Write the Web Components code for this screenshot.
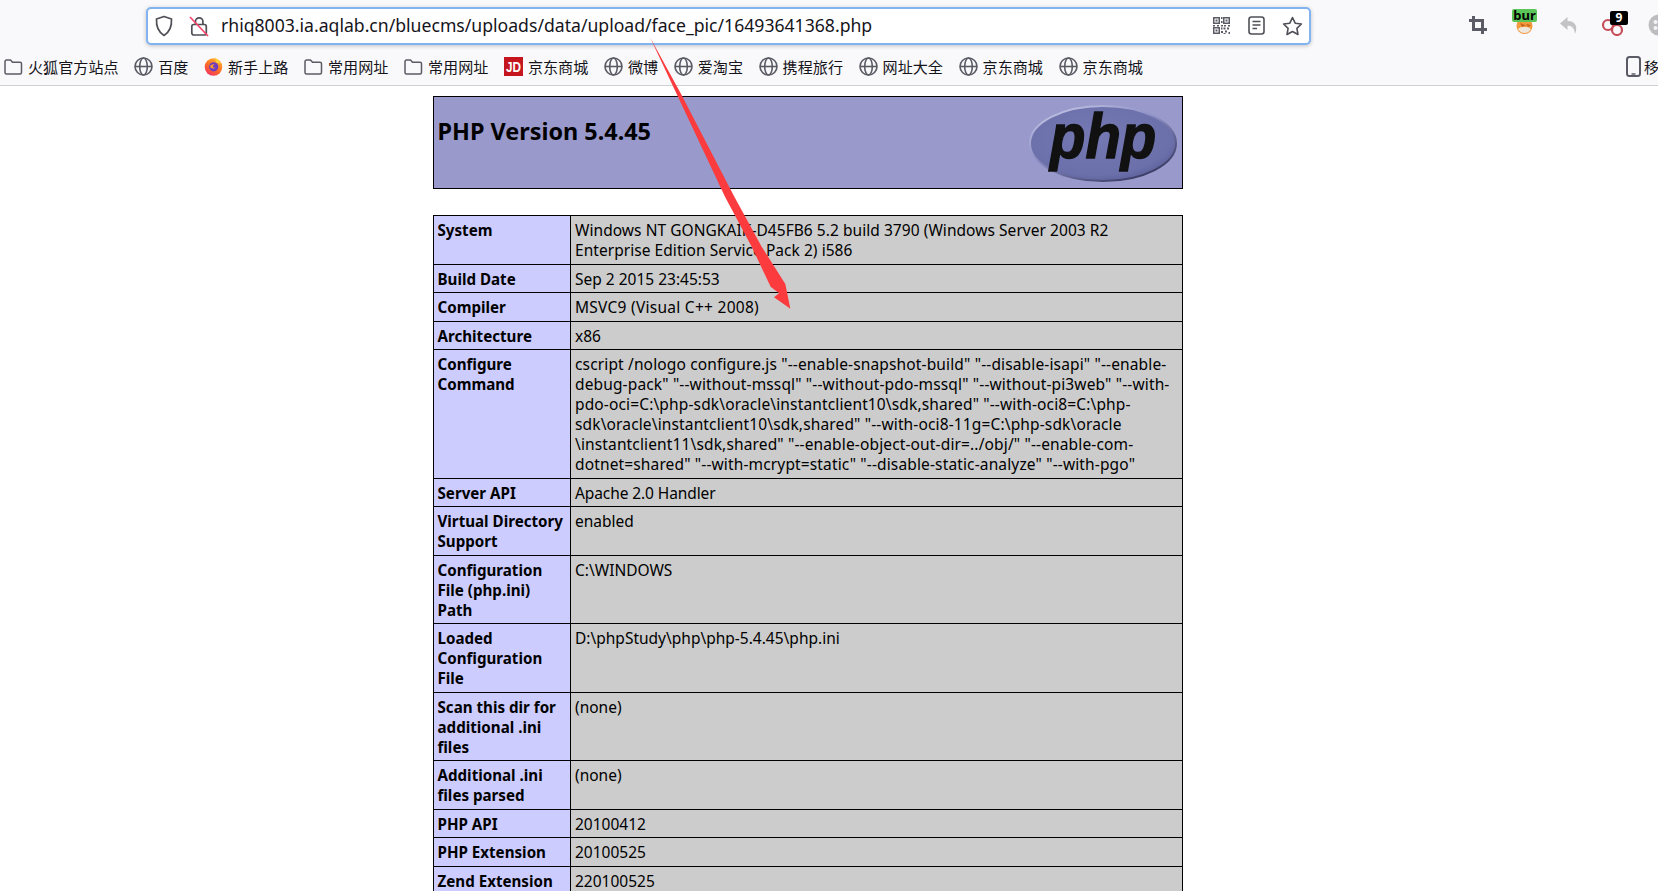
<!DOCTYPE html>
<html lang="zh">
<head>
<meta charset="utf-8">
<title>phpinfo()</title>
<style>
    html, body { margin: 0; background: #fff; overflow: hidden; height: 891px; }
    body { position: relative; font-family: "Noto Sans", "Noto Sans CJK SC", sans-serif; }
</style>
</head>
<body>
<browser-chrome>
    <url-bar slot="url">rhiq8003.ia.aqlab.cn/bluecms/uploads/data/upload/face_pic/16493641368.php</url-bar>
    <tool-icons slot="tools"></tool-icons>
    <bookmark-item slot="marks" icon="folder">火狐官方站点</bookmark-item>
    <bookmark-item slot="marks" icon="globe">百度</bookmark-item>
    <bookmark-item slot="marks" icon="firefox">新手上路</bookmark-item>
    <bookmark-item slot="marks" icon="folder">常用网址</bookmark-item>
    <bookmark-item slot="marks" icon="folder">常用网址</bookmark-item>
    <bookmark-item slot="marks" icon="jd">京东商城</bookmark-item>
    <bookmark-item slot="marks" icon="globe">微博</bookmark-item>
    <bookmark-item slot="marks" icon="globe">爱淘宝</bookmark-item>
    <bookmark-item slot="marks" icon="globe">携程旅行</bookmark-item>
    <bookmark-item slot="marks" icon="globe">网址大全</bookmark-item>
    <bookmark-item slot="marks" icon="globe">京东商城</bookmark-item>
    <bookmark-item slot="marks" icon="globe">京东商城</bookmark-item>
</browser-chrome>
<php-page>
    <php-header>PHP Version 5.4.45</php-header>
    <php-table>
        <php-row name="System" style="letter-spacing:.05px">Windows NT GONGKAIK-D45FB6 5.2 build 3790 (Windows Server 2003 R2<br>Enterprise Edition Service Pack 2) i586</php-row>
        <php-row name="Build Date">Sep 2 2015 23:45:53</php-row>
        <php-row name="Compiler" style="letter-spacing:.27px">MSVC9 (Visual C++ 2008)</php-row>
        <php-row name="Architecture">x86</php-row>
        <php-row name="Configure<br>Command" style="letter-spacing:.14px">cscript /nologo configure.js "--enable-snapshot-build" "--disable-isapi" "--enable-<br>debug-pack" "--without-mssql" "--without-pdo-mssql" "--without-pi3web" "--with-<br>pdo-oci=C:\php-sdk\oracle\instantclient10\sdk,shared" "--with-oci8=C:\php-<br>sdk\oracle\instantclient10\sdk,shared" "--with-oci8-11g=C:\php-sdk\oracle<br>\instantclient11\sdk,shared" "--enable-object-out-dir=../obj/" "--enable-com-<br>dotnet=shared" "--with-mcrypt=static" "--disable-static-analyze" "--with-pgo"</php-row>
        <php-row name="Server API" style="letter-spacing:-.1px">Apache 2.0 Handler</php-row>
        <php-row name="Virtual Directory<br>Support">enabled</php-row>
        <php-row name="Configuration<br>File (php.ini)<br>Path">C:\WINDOWS</php-row>
        <php-row name="Loaded<br>Configuration<br>File">D:\phpStudy\php\php-5.4.45\php.ini</php-row>
        <php-row name="Scan this dir for<br>additional .ini<br>files">(none)</php-row>
        <php-row name="Additional .ini<br>files parsed">(none)</php-row>
        <php-row name="PHP API">20100412</php-row>
        <php-row name="PHP Extension">20100525</php-row>
        <php-row name="Zend Extension">220100525</php-row>
    </php-table>
</php-page>
<red-arrow></red-arrow>

<script>
const stroke = "#5b5b66";

const bookmarkIcons = {
    folder: `<svg width="19" height="19" viewBox="0 0 19 19" fill="none" stroke="${stroke}" stroke-width="1.5" stroke-linejoin="round">
        <path d="M1 4.500a1.500 1.500 0 0 1 1.500-1.500h4l2 2.200h7.500a1.500 1.500 0 0 1 1.500 1.500v8.800a1.500 1.500 0 0 1-1.500 1.500H2.500a1.500 1.500 0 0 1-1.500-1.500z"/>
    </svg>`,
    globe: `<svg width="19" height="19" viewBox="0 0 19 19" fill="none" stroke="${stroke}" stroke-width="1.6">
        <circle cx="9.500" cy="9.500" r="8.500"/>
        <ellipse cx="9.500" cy="9.500" rx="3.800" ry="8.500"/>
        <path d="M1 9.500h17"/>
    </svg>`,
    firefox: `<svg width="19" height="19" viewBox="0 0 19 19">
        <defs>
            <linearGradient id="fx" x1="0.8" y1="0" x2="0.2" y2="1">
                <stop offset="0" stop-color="#ffb72b"/>
                <stop offset="0.55" stop-color="#ff6a26"/>
                <stop offset="1" stop-color="#f02e6a"/>
            </linearGradient>
        </defs>
        <circle cx="9.500" cy="10" r="8.800" fill="url(#fx)"/>
        <path d="M11 0.500c2.500 1.600 4.600 3.600 5.600 6.200L12 5.600z" fill="#ffd23c"/>
        <circle cx="9.700" cy="9.800" r="4.600" fill="#6b3bc0"/>
        <path d="M6 9.500c1-2.400 4-3 5.600-1.600-1.600-.2-2.600.5-2.600 1.600 0 1 1.200 1.600 2.800 1-1 1.600-5 1.600-5.800-1z" fill="#ff9a2e"/>
    </svg>`,
    jd: `<svg width="19" height="19" viewBox="0 0 19 19">
        <rect width="19" height="19" fill="#c5161f"/>
        <text x="9.500" y="15" text-anchor="middle" font-family="Liberation Sans, sans-serif" font-weight="700" font-size="14" textLength="15" lengthAdjust="spacingAndGlyphs" fill="#fff">JD</text>
    </svg>`
};

class BrowserChrome extends HTMLElement {
    constructor() {
        super();
        this.attachShadow({ mode: "open" });
        this.shadowRoot.innerHTML = `
        <style>
            :host {
                display: block;
                height: 85px;
                background: #f9f9fb;
                border-bottom: 1px solid #cfcfd4;
                overflow: hidden;
            }
            .top {
                display: flex;
                align-items: center;
                height: 50px;
                padding-left: 146px;
            }
            .marks {
                display: flex;
                align-items: center;
                gap: 15.600px;
                height: 32px;
                padding-left: 4px;
                white-space: nowrap;
                position: relative;
            }
            .mobile {
                position: absolute;
                left: 1625px;
                top: 6px;
                display: flex;
                align-items: center;
                gap: 2px;
                font: 15px "Noto Sans CJK SC", sans-serif;
                color: #15141a;
            }
        </style>
        <div class="top">
            <slot name="url"></slot>
            <slot name="tools"></slot>
        </div>
        <div class="marks">
            <slot name="marks"></slot>
            <div class="mobile">
                <svg width="17" height="21" viewBox="0 0 17 21" fill="none" stroke="${stroke}" stroke-width="2">
                    <rect x="2" y="1" width="13" height="19" rx="2.500"/>
                    <path d="M6.500 18h4" stroke-width="1.500"/>
                </svg>
                <span>移</span>
            </div>
        </div>`;
    }
}

class UrlBar extends HTMLElement {
    constructor() {
        super();
        this.attachShadow({ mode: "open" });
        this.shadowRoot.innerHTML = `
        <style>
            :host {
                display: flex;
                flex: none;
                align-items: center;
                box-sizing: border-box;
                width: 1165px;
                height: 38px;
                margin-top: 1px;
                background: #fff;
                border: 2px solid #80b3f0;
                border-radius: 5px;
                box-shadow: 0 1px 4px rgba(0, 0, 0, .22);
                padding: 0 6px 0 6px;
            }
            .text {
                flex: 1;
                margin-left: 12px;
                font: 17.630px "Noto Sans", sans-serif;
                color: #15141a;
                white-space: nowrap;
                padding-bottom: 1px;
            }
            svg { flex: none; display: block; }
            .lock { margin-left: 15px; }
            .right { display: flex; align-items: center; gap: 17px; }
        </style>
        <svg width="20" height="22" viewBox="0 0 20 22" fill="none" stroke="#4f4f58" stroke-width="1.700" stroke-linejoin="round">
            <path d="M10 1.500 17.500 4c.4 7.500-1.800 13-7.500 16.500C4.300 17 2.100 11.500 2.500 4z"/>
        </svg>
        <svg class="lock" width="20" height="22" viewBox="0 0 20 22" fill="none">
            <path d="M6.500 9V6.500a3.700 3.700 0 0 1 7.400 0V9" stroke="#4f4f58" stroke-width="1.700"/>
            <rect x="2.800" y="9.500" width="14.500" height="10.500" rx="2" stroke="#4f4f58" stroke-width="1.700"/>
            <path d="M1 2 19 21" stroke="#f5446a" stroke-width="1.700"/>
        </svg>
        <div class="text"><slot></slot></div>
        <div class="right">
            <svg width="19" height="19" viewBox="0 0 19 19" fill="#5b5b66">
                <path fill-rule="evenodd" d="M1 1h7v7H1zM2.500 2.500v4h4v-4zM11 1h7v7h-7zM12.500 2.500v4h4v-4zM1 11h7v7H1zM2.500 12.500v4h4v-4z"/>
                <path d="M3.500 3.500h2v2h-2zM13.500 3.500h2v2h-2zM3.500 13.500h2v2h-2zM9 1h1.500v2H9zM9 5h1.500v2H9zM9 9h2v1.500H9zM1 9h2v1.500H1zM5 9h2v1.500H5zM12 9h2v1.500h-2zM16 9h2v1.500h-2zM9 11.500h1.500v2H9zM11.500 11.500h2v2h-2zM15 11.500h2v2h-2zM9 15h2v2H9zM13 14.500h2v2h-2zM16.500 16h1.500v2h-1.500zM11.500 17h2v1h-2z"/>
            </svg>
            <svg width="17" height="19" viewBox="0 0 17 19" fill="none" stroke="#4f4f58" stroke-width="1.600">
                <rect x="1" y="1" width="15" height="17" rx="2.500"/>
                <path d="M4.500 5.500h8M4.500 9h8M4.500 12.500h4.500"/>
            </svg>
            <svg width="21" height="20" viewBox="0 0 21 20" fill="none" stroke="#4f4f58" stroke-width="1.600" stroke-linejoin="round">
                <path d="M10.500 1.500l2.700 5.700 6.200.8-4.500 4.300 1.100 6.200-5.500-3-5.500 3 1.100-6.200L1.600 8l6.200-.8z"/>
            </svg>
        </div>`;
    }
}

class ToolIcons extends HTMLElement {
    constructor() {
        super();
        this.attachShadow({ mode: "open" });
        this.shadowRoot.innerHTML = `
        <style>
            :host {
                display: flex;
                align-items: center;
                margin-left: 158px;
                height: 50px;
                flex: none;
            }
            .slot { position: relative; flex: none; }
            svg { display: block; }
            .bur-tag {
                position: absolute;
                left: 0;
                top: 0;
                width: 25px;
                height: 13px;
                background: #5cc55a;
                border-radius: 2px;
                font: 700 13px/12px "Noto Sans", sans-serif;
                color: #000;
                text-align: center;
            }
            .nine {
                position: absolute;
                left: 9px;
                top: 0;
                width: 18px;
                height: 14px;
                background: #000;
                border-radius: 2px;
                font: 700 12px/14px "Noto Sans", sans-serif;
                color: #fff;
                text-align: center;
            }
        </style>
        <div class="slot" style="width:18px;height:18px">
            <svg width="18" height="18" viewBox="0 0 18 18" fill="none" stroke="#5b5b66" stroke-width="3">
                <path d="M4.500 0v13.500H18M0 4.500h13.500V18"/>
            </svg>
        </div>
        <div class="slot" style="width:25px;height:25px;margin-left:25px;margin-top:-8px">
            <svg width="25" height="25" viewBox="0 0 25 25">
                <circle cx="12.500" cy="17" r="8" fill="#f39a3c"/>
                <path d="M6 20c3-3 9-3 13 0-2 3-4 4-6.500 4S8 23 6 20z" fill="#efe7dc"/>
                <path d="M8 14l6 2.500L10 18zM14 15l5 1-3 2z" fill="#c9641c"/>
            </svg>
            <div class="bur-tag">bur</div>
        </div>
        <div class="slot" style="width:20px;height:18px;margin-left:22px;margin-top:2px">
            <svg width="20" height="18" viewBox="0 0 20 18" fill="#c2c2c7">
                <path d="M8.500 0 1 6.500 8.500 13V8.800c4 0 6.700 1.500 7.500 8.200 3-6.500 1-13-7.500-13z"/>
            </svg>
        </div>
        <div class="slot" style="width:31px;height:25px;margin-left:22px;margin-top:-4px">
            <svg width="31" height="25" viewBox="0 0 31 25" fill="none" stroke="#c64c58" stroke-width="2.200">
                <circle cx="7" cy="14" r="5"/>
                <circle cx="16" cy="19" r="5"/>
            </svg>
            <div class="nine">9</div>
        </div>
        <div class="slot" style="width:22px;height:22px;margin-left:16px">
            <svg width="22" height="22" viewBox="0 0 22 22">
                <circle cx="11" cy="11" r="10.500" fill="#bdbdc1"/>
                <circle cx="7.500" cy="8" r="2" fill="#f5f5f5"/>
                <circle cx="7.500" cy="14" r="2" fill="#f5f5f5"/>
            </svg>
        </div>`;
    }
}

class BookmarkItem extends HTMLElement {
    constructor() {
        super();
        this.attachShadow({ mode: "open" });
    }
    connectedCallback() {
        const icon = bookmarkIcons[this.getAttribute("icon")] || "";
        this.shadowRoot.innerHTML = `
        <style>
            :host {
                display: inline-flex;
                align-items: center;
                gap: 5px;
                font: 15.100px/20px "Noto Sans CJK SC", "Noto Sans", sans-serif;
                color: #15141a;
                flex: none;
            }
            svg { display: block; flex: none; }
        </style>
        ${icon}<slot></slot>`;
    }
}

class PhpPage extends HTMLElement {
    constructor() {
        super();
        this.attachShadow({ mode: "open" });
        this.shadowRoot.innerHTML = `
        <style>
            :host {
                display: flex;
                flex-direction: column;
                align-items: center;
                gap: 26px;
                width: 1616px;
                padding-top: 10px;
                color: #000;
                font-family: "Noto Sans", sans-serif;
            }
        </style>
        <slot></slot>`;
    }
}

class PhpHeader extends HTMLElement {
    constructor() {
        super();
        this.attachShadow({ mode: "open" });
        this.shadowRoot.innerHTML = `
        <style>
            :host {
                display: flex;
                justify-content: space-between;
                box-sizing: border-box;
                width: 750px;
                height: 93px;
                background: #9999cc;
                border: 1px solid #000;
                padding: 0 5px 0 3.500px;
            }
            h1 {
                margin: 20px 0 0;
                font: 700 23.400px/28px "Noto Sans", sans-serif;
            }
            svg { display: block; margin-top: 8px; flex: none; }
            text {
                font-family: "Liberation Sans", sans-serif;
                font-weight: 700;
                font-style: italic;
            }
        </style>
        <h1><slot></slot></h1>
        <svg width="148" height="77" viewBox="0 0 148 77">
            <defs>
                <radialGradient id="egg" cx="0.45" cy="0.4" r="0.65">
                    <stop offset="0" stop-color="#7478b3"/>
                    <stop offset="0.8" stop-color="#6b70ab"/>
                    <stop offset="1" stop-color="#5a5e96"/>
                </radialGradient>
                <linearGradient id="rim" x1="0.1" y1="0" x2="0.85" y2="1">
                    <stop offset="0" stop-color="#c6c8e6"/>
                    <stop offset="0.45" stop-color="#8a8dc2"/>
                    <stop offset="1" stop-color="#2e3056"/>
                </linearGradient>
            </defs>
            <ellipse cx="74" cy="38.500" rx="73" ry="37.500" fill="url(#egg)" stroke="url(#rim)" stroke-width="2"/>
            <text transform="translate(21 53) scale(1 1.070)" font-size="58" fill="#111" stroke="#111" stroke-width="1.300">php</text>
        </svg>`;
    }
}

class PhpTable extends HTMLElement {
    constructor() {
        super();
        this.attachShadow({ mode: "open" });
        this.shadowRoot.innerHTML = `
        <style>
            :host {
                display: flex;
                flex-direction: column;
                box-sizing: border-box;
                width: 750px;
                border-left: 1px solid #000;
                border-right: 1px solid #000;
            }
        </style>
        <slot></slot>`;
    }
}

class PhpRow extends HTMLElement {
    constructor() {
        super();
        this.attachShadow({ mode: "open" });
    }
    connectedCallback() {
        const name = this.getAttribute("name") || "";
        this.shadowRoot.innerHTML = `
        <style>
            :host {
                display: grid;
                grid-template-columns: 137px 1fr;
                border-top: 1px solid #000;
            }
            .e, .v {
                padding: 4px 4px 3.500px;
                line-height: 20px;
                white-space: nowrap;
            }
            .e {
                background: #ccccff;
                border-right: 1px solid #000;
                padding-left: 3.500px;
                letter-spacing: 0;
                font: 700 15.150px/20px "Noto Sans", sans-serif;
            }
            .v {
                background: #cccccc;
                font: 15.500px/20px "Noto Sans", sans-serif;
            }
        </style>
        <div class="e">${name}</div>
        <div class="v"><slot></slot></div>`;
    }
}

class RedArrow extends HTMLElement {
    constructor() {
        super();
        this.attachShadow({ mode: "open" });
        this.shadowRoot.innerHTML = `
        <style>
            :host {
                position: absolute;
                left: 640px;
                top: 30px;
                width: 180px;
                height: 290px;
                pointer-events: none;
            }
            svg { display: block; }
        </style>
        <svg width="180" height="290" viewBox="0 0 540 870">
            <polygon points="30,22 122,190 283,500 365,650 436,762 451,836 402,802 417,790 392,770 335,650 255,500 116,205" fill="#fb3b3d"/>
        </svg>`;
    }
}

customElements.define("browser-chrome", BrowserChrome);
customElements.define("url-bar", UrlBar);
customElements.define("tool-icons", ToolIcons);
customElements.define("bookmark-item", BookmarkItem);
customElements.define("php-page", PhpPage);
customElements.define("php-header", PhpHeader);
customElements.define("php-table", PhpTable);
customElements.define("php-row", PhpRow);
customElements.define("red-arrow", RedArrow);
</script>
</body>
</html>
